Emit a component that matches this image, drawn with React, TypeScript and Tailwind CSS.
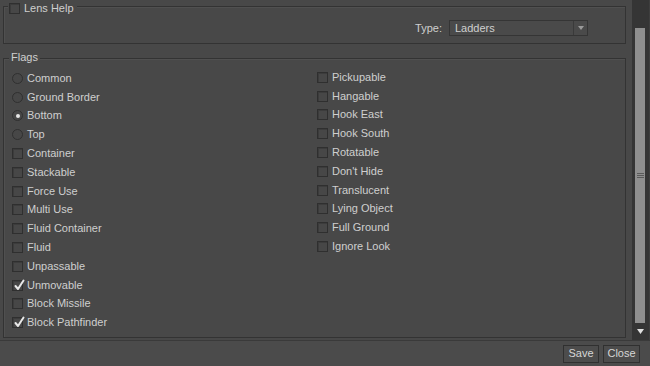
import React from "react";

const Check = ({ checked }: { checked?: boolean }) => (
  <span className="relative w-[11px] h-[11px] shrink-0 border border-[#2f2f2f] bg-[#474747] shadow-[inset_1px_1px_0_#3c3c3c]">
    {checked && (
      <svg className="absolute left-[1px] -top-[2px]" width="11" height="12" viewBox="0 0 11 12">
        <path d="M1.5 7 L4 10 L9.5 1.5" fill="none" stroke="#e8e8e8" strokeWidth="2" strokeLinecap="round" strokeLinejoin="round" />
      </svg>
    )}
  </span>
);

const Radio = ({ checked }: { checked?: boolean }) => (
  <span className="relative w-[11px] h-[11px] shrink-0 rounded-full border border-[#303030] bg-[#474747] flex items-center justify-center">
    {checked && <span className="w-[4px] h-[4px] rounded-full bg-[#e6e6e6]" />}
  </span>
);

const Row = ({ label, kind, checked }: { label: string; kind: "r" | "c"; checked?: boolean }) => (
  <div className="h-[18.8px] flex items-center gap-[4px]">
    {kind === "r" ? <Radio checked={checked} /> : <Check checked={checked} />}
    <span className="leading-none">{label}</span>
  </div>
);

export default function App() {
  const left: { label: string; kind: "r" | "c"; checked?: boolean }[] = [
    { label: "Common", kind: "r" },
    { label: "Ground Border", kind: "r" },
    { label: "Bottom", kind: "r", checked: true },
    { label: "Top", kind: "r" },
    { label: "Container", kind: "c" },
    { label: "Stackable", kind: "c" },
    { label: "Force Use", kind: "c" },
    { label: "Multi Use", kind: "c" },
    { label: "Fluid Container", kind: "c" },
    { label: "Fluid", kind: "c" },
    { label: "Unpassable", kind: "c" },
    { label: "Unmovable", kind: "c", checked: true },
    { label: "Block Missile", kind: "c" },
    { label: "Block Pathfinder", kind: "c", checked: true },
  ];
  const right = [
    "Pickupable",
    "Hangable",
    "Hook East",
    "Hook South",
    "Rotatable",
    "Don't Hide",
    "Translucent",
    "Lying Object",
    "Full Ground",
    "Ignore Look",
  ];
  return (
    <div
      className="w-[650px] h-[366px] bg-[#484848] flex flex-col text-[11px] text-[#cfcfcf] overflow-hidden"
      style={{ fontFamily: '"Liberation Sans", Arial, sans-serif' }}
    >
      <div className="h-[340px] flex">
        <div className="w-[632px] pl-[3px] pr-[6px] flex flex-col">
          {/* Lens Help group */}
          <div className="relative mt-[6px] h-[38px] border border-[#333333] shadow-[inset_1px_1px_0_#505050]">
            <div className="absolute -top-[4px] left-[4px] bg-[#484848] px-[1px] pr-[3px] flex items-center gap-[4px] h-[11px]">
              <Check />
              <span className="leading-none">Lens Help</span>
            </div>
            <div className="flex justify-end items-center gap-[7px] mt-[13px] pr-[37px]">
              <span>Type:</span>
              <div className="w-[139px] h-[16px] flex items-center border border-[#353535] bg-[#4a4a4a]">
                <span className="flex-1 pl-[5px] leading-none">Ladders</span>
                <span className="w-[14px] h-full border-l border-[#3a3a3a] flex items-center justify-center">
                  <svg width="6" height="4" viewBox="0 0 6 4">
                    <path d="M0 0 H6 L3 4 Z" fill="#9a9a9a" />
                  </svg>
                </span>
              </div>
            </div>
          </div>
          {/* Flags group */}
          <div className="relative mt-[14px] h-[280px] border border-[#333333] shadow-[inset_1px_1px_0_#505050]">
            <div className="absolute -top-[7px] left-[5px] bg-[#484848] px-[2px] leading-none">Flags</div>
            <div className="grid grid-cols-[305px_1fr] pl-[8px] pt-[10px]">
              <div className="flex flex-col">
                {left.map((r) => (
                  <Row key={r.label} {...r} />
                ))}
              </div>
              <div className="flex flex-col -mt-[1px]">
                {right.map((l) => (
                  <Row key={l} label={l} kind="c" />
                ))}
              </div>
            </div>
          </div>
        </div>
        {/* Scrollbar */}
        <div className="w-[18px] h-full bg-[#353535] flex flex-col pl-[3px] pr-[4px] border-r border-[#3e3e3e]">
          <div className="h-[28px]" />
          <div className="h-[295px] bg-[#8f8f8f] flex items-center justify-center">
            <div className="flex flex-col gap-[1px]">
              <span className="w-[7px] h-[1px] bg-[#5a5a5a]" />
              <span className="w-[7px] h-[1px] bg-[#5a5a5a]" />
              <span className="w-[7px] h-[1px] bg-[#5a5a5a]" />
            </div>
          </div>
          <div className="flex-1 flex items-center justify-center">
            <svg width="7" height="5" viewBox="0 0 7 5">
              <path d="M0 0 H7 L3.5 5 Z" fill="#e0e0e0" />
            </svg>
          </div>
        </div>
      </div>
      {/* Bottom bar */}
      <div className="flex-1 bg-[#4b4b4b] border-t border-[#3a3a3a] flex justify-end items-center gap-[4px] pr-[10px]">
        <button className="w-[36px] h-[18px] border border-[#303030] bg-[#4c4c4c] text-[#d6d6d6] leading-none">Save</button>
        <button className="w-[37px] h-[18px] border border-[#303030] bg-[#4c4c4c] text-[#d6d6d6] leading-none">Close</button>
      </div>
    </div>
  );
}
